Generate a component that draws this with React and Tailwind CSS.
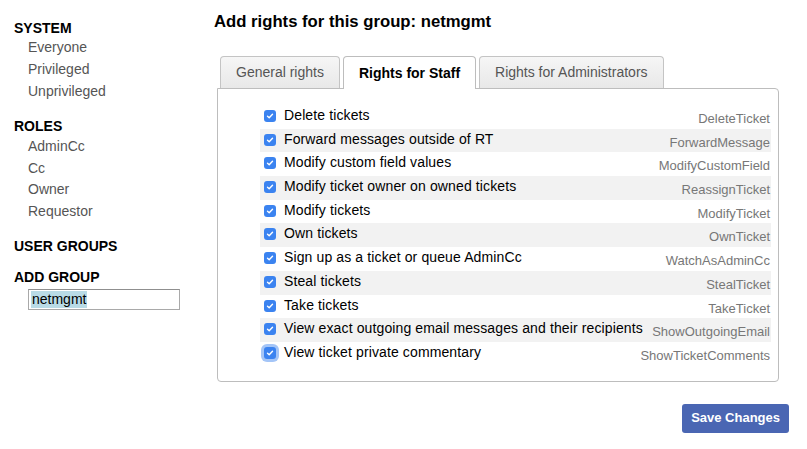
const system = ['Everyone', 'Privileged', 'Unprivileged'];
const roles = ['AdminCc', 'Cc', 'Owner', 'Requestor'];

const rights = [
  ['Delete tickets', 'DeleteTicket'],
  ['Forward messages outside of RT', 'ForwardMessage'],
  ['Modify custom field values', 'ModifyCustomField'],
  ['Modify ticket owner on owned tickets', 'ReassignTicket'],
  ['Modify tickets', 'ModifyTicket'],
  ['Own tickets', 'OwnTicket'],
  ['Sign up as a ticket or queue AdminCc', 'WatchAsAdminCc'],
  ['Steal tickets', 'StealTicket'],
  ['Take tickets', 'TakeTicket'],
  ['View exact outgoing email messages and their recipients', 'ShowOutgoingEmail'],
  ['View ticket private commentary', 'ShowTicketComments'],
];

function Check({ focus }) {
  return (
    <span
      className={`mt-[5px] w-[12px] h-[12px] rounded-[3px] bg-[#3b83f0] flex items-center justify-center shrink-0 ${
        focus ? 'shadow-[0_0_0_3px_rgba(90,150,240,0.55)]' : ''
      }`}
    >
      <svg width="8" height="8" viewBox="0 0 8 8">
        <path d="M1.5 4.2 L3.2 5.8 L6.5 2.2" fill="none" stroke="white" strokeWidth="1.4" strokeLinecap="round" strokeLinejoin="round" />
      </svg>
    </span>
  );
}

function Tab({ label, active }) {
  return active ? (
    <div className="h-[33px] px-[15px] flex items-center border border-[#bdbdbd] border-b-0 rounded-t-[4px] bg-white font-bold text-black relative top-px z-10">
      {label}
    </div>
  ) : (
    <div className="h-[32px] px-[15px] flex items-center border border-[#c4c4c4] border-b-0 rounded-t-[4px] bg-gradient-to-b from-[#f6f6f6] to-[#e8e8e8] text-[#555]">
      {label}
    </div>
  );
}

export default function App() {
  return (
    <div className="w-[807px] h-[449px] bg-white flex font-['Liberation_Sans',Arial,sans-serif] text-[14px] text-black">
      <aside className="w-[214px] shrink-0 pl-[14px] pt-[20px]">
        <div className="font-bold leading-[16px]">SYSTEM</div>
        <ul className="pl-[14px] text-[#555]">
          {system.map((s) => (
            <li key={s} className="leading-[22px]">{s}</li>
          ))}
        </ul>
        <div className="font-bold leading-[16px] mt-[16px]">ROLES</div>
        <ul className="pl-[14px] text-[#555] mt-[2px]">
          {roles.map((s) => (
            <li key={s} className="leading-[21.7px]">{s}</li>
          ))}
        </ul>
        <div className="font-bold leading-[16px] mt-[15px]">USER GROUPS</div>
        <div className="font-bold leading-[16px] mt-[15px]">ADD GROUP</div>
        <div className="ml-[14px] mt-[4px] w-[152px] h-[21px] border border-[#a9a9a9] border-t-[#8f8f8f] flex items-center pl-[2px]">
          <span className="bg-[#b9dbe6] leading-[17px] px-px">netmgmt</span>
        </div>
      </aside>

      <main className="flex-1 pt-[12px]">
        <h1 className="text-[16.7px] font-bold leading-[20px]">Add rights for this group: netmgmt</h1>
        <div className="mt-[23px] ml-[3px] w-[562px]">
          <div className="flex gap-[3px] pl-[3px] items-end">
            <Tab label="General rights" />
            <Tab label="Rights for Staff" active />
            <Tab label="Rights for Administrators" />
          </div>
          <div className="border border-[#bdbdbd] rounded-b-[4px] rounded-tr-[4px] pt-[16px] pb-[15px] pl-[42px] pr-[7px]">
            {rights.map(([label, name], i) => (
              <div
                key={name}
                className={`h-[23.7px] flex justify-between pl-[4px] pr-[1px] ${i % 2 === 1 ? 'bg-[#f2f2f2]' : ''}`}
              >
                <div className="flex gap-[8px]">
                  <Check focus={i === rights.length - 1} />
                  <span className="leading-[20px] tracking-[0.12px]">{label}</span>
                </div>
                <span className="text-[13px] text-[#777] leading-[20px] pt-[4px]">{name}</span>
              </div>
            ))}
          </div>
        </div>
        <div className="w-[575px] flex justify-end mt-[22px]">
          <button className="h-[29px] px-[9px] bg-[#4a66b3] text-white rounded-[3px] font-bold text-[13px]">
            Save Changes
          </button>
        </div>
      </main>
    </div>
  );
}
